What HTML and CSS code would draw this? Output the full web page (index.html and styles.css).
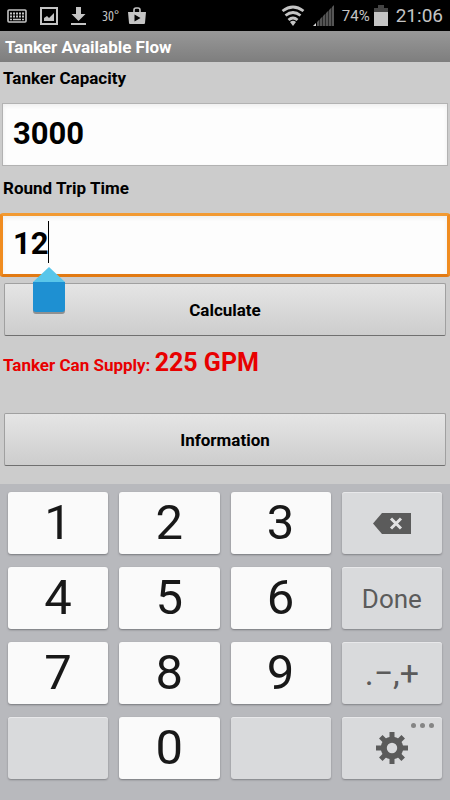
FILE: index.html
```html
<!DOCTYPE html>
<html lang="en">
<head>
<meta charset="utf-8">
<meta name="viewport" content="width=device-width, initial-scale=1">
<title>Tanker Available Flow</title>
<link rel="stylesheet" href="styles.css">
</head>
<body>
<header class="status">
  <div class="status-left">
    <svg width="20" height="14" viewBox="0 0 20 14" aria-hidden="true"><rect x="1" y="1" width="18" height="12" rx="1" fill="none" stroke="currentColor" stroke-width="1.6"/><path d="M3 4.500h14M3 7.500h14" stroke="currentColor" stroke-width="2" stroke-dasharray="2 1"/><path d="M3 10.500h2M6 10.500h8M15 10.500h2" stroke="currentColor" stroke-width="1.6"/></svg>
    <svg width="18" height="18" viewBox="0 0 18 18" aria-hidden="true"><rect x="1" y="1" width="16" height="16" fill="none" stroke="currentColor" stroke-width="2"/><path d="M4 14V11l3-2 2 2 5-5v8z" fill="currentColor"/></svg>
    <svg width="16" height="18" viewBox="0 0 16 18" aria-hidden="true"><path d="M5 0h5v7h4.500L7.500 14 .5 7H5zM0 16h15v2H0z" fill="currentColor"/></svg>
    <span class="temp">30°</span>
    <svg width="18" height="18" viewBox="0 0 18 18" aria-hidden="true"><path d="M6 5V3q0-2 2-2h2q2 0 2 2v2" fill="none" stroke="currentColor" stroke-width="1.6"/><path fill-rule="evenodd" d="M0 5h18l-1 11q0 1-1 1H2q-1 0-1-1zM6.500 7.500v7l6-3.500z" fill="currentColor"/></svg>
  </div>
  <div class="status-right">
    <svg width="24" height="21" viewBox="0 0 24 21" aria-hidden="true"><g fill="none" stroke="currentColor" stroke-width="2.800"><path d="M1.500 6q10.500-8 21 0"/><path d="M4.500 10.500q7.500-6 15 0"/><path d="M7.500 15q4.500-4 9 0"/></g><path d="M9 17q3-2.500 6 0l-3 4z" fill="currentColor"/></svg>
    <svg class="signal" width="21" height="21" viewBox="0 0 21 21" aria-hidden="true"><path d="M4 21v-4l2.500-2.500V21zM7 21v-7l2.500-2.500V21zM10 21V11l2.500-2.500V21zM13 21V8l2.500-2.500V21zM16 21V5l2.500-2.500V21zM19 21V2l2-2v21z" fill="#555"/><path d="M0 21l3-3v3z" fill="#ddd"/></svg>
    <span class="percent">74%</span>
    <svg class="battery" width="14" height="21" viewBox="0 0 14 21" aria-hidden="true"><path d="M4 0h6v3h4v5H0V3h4z" fill="#444"/><path d="M0 7h14v14H0z" fill="currentColor"/></svg>
    <time class="clock">21:06</time>
  </div>
</header>
<h1 class="title">Tanker Available Flow</h1>
<main class="form">
  <label class="label" for="capacity">Tanker Capacity</label>
  <div class="field"><input class="input" id="capacity" type="text" inputmode="numeric" value="3000"></div>
  <label class="label" for="trip">Round Trip Time</label>
  <div class="field field-focus">
    <input class="input" id="trip" type="text" inputmode="numeric" value="12">
    <span class="caret"></span>
    <svg class="handle" width="40" height="54" viewBox="0 0 40 54" aria-hidden="true"><path d="M4 18h32v27q0 3-3 3H7q-3 0-3-3z" fill="#555" opacity=".55"/><path d="M4 16L20 1l16 15z" fill="#58c6ea"/><path d="M4 16h32v27q0 3-3 3H7q-3 0-3-3z" fill="#1e90d2"/></svg>
  </div>
  <button class="action" type="button">Calculate</button>
  <p class="result">Tanker Can Supply: <strong class="amount">225 GPM</strong></p>
  <button class="action" type="button">Information</button>
</main>
<section class="keyboard" aria-label="Number keypad">
  <button class="key" type="button">1</button>
  <button class="key" type="button">2</button>
  <button class="key" type="button">3</button>
  <button class="key key-gray" type="button" aria-label="Delete"><svg width="38" height="21" viewBox="0 0 38 21"><path d="M9 0h29v21H9L0 10.500z" fill="#5b5b5b"/><path d="M18 5.500l10 10M28 5.500l-10 10" stroke="#e1e1e2" stroke-width="3"/></svg></button>
  <button class="key" type="button">4</button>
  <button class="key" type="button">5</button>
  <button class="key" type="button">6</button>
  <button class="key key-gray key-done" type="button">Done</button>
  <button class="key" type="button">7</button>
  <button class="key" type="button">8</button>
  <button class="key" type="button">9</button>
  <button class="key key-gray key-symbols" type="button">.−,+</button>
  <button class="key key-gray" type="button" aria-label="Blank"></button>
  <button class="key" type="button">0</button>
  <button class="key key-gray" type="button" aria-label="Blank"></button>
  <button class="key key-gray" type="button" aria-label="Settings">
    <svg width="32" height="32" viewBox="-16 -16 32 32"><g stroke="#5b5b5b" stroke-width="5"><path d="M0-16V-9M0 9V16M-16 0H-9M9 0H16"/><path d="M-11.200-11.200L-7-7M7 7L11.200 11.200M-11.200 11.200L-7 7M7-7L11.200-11.200"/></g><circle r="8.200" fill="none" stroke="#5b5b5b" stroke-width="6"/></svg>
    <svg class="more" width="23" height="5" viewBox="0 0 23 5"><g fill="#858585"><circle cx="2.500" cy="2.500" r="2.500"/><circle cx="11.500" cy="2.500" r="2.500"/><circle cx="20.500" cy="2.500" r="2.500"/></g></svg>
  </button>
</section>
</body>
</html>
```
FILE: styles.css
```css
* {
  box-sizing: border-box;
}

body {
  margin: 0;
  min-height: 100vh;
  display: flex;
  flex-direction: column;
  background: #ccc;
  color: #000;
  font-family: Roboto, "Liberation Sans", sans-serif;
}

button,
input {
  font-family: inherit;
  color: inherit;
}

.status {
  display: flex;
  justify-content: space-between;
  align-items: center;
  height: 31px;
  padding: 0 7px;
  background: #000;
  color: #c4c4c4;
}

.status-left,
.status-right {
  display: flex;
  align-items: center;
}

.status-left {
  gap: 13px;
}

.status-right {
  gap: 8px;
}

.temp {
  margin: 0 -4px 0 2px;
  font-family: "Open Sans", sans-serif;
  font-size: 14px;
  font-stretch: condensed;
}

.percent {
  font-size: 15px;
  font-weight: 400;
}

.battery {
  margin-left: -4px;
}

.clock {
  font-size: 19px;
  line-height: 24px;
}

.title {
  margin: 0;
  padding: 0 5px;
  height: 31px;
  background: linear-gradient(#989898, #7e7e7e);
  color: #fff;
  font-size: 17px;
  line-height: 33px;
  font-weight: 700;
}

.form {
  flex: 1;
  display: flex;
  flex-direction: column;
}

.label {
  padding: 0 3px;
  height: 32px;
  font-size: 17px;
  line-height: 32px;
  font-weight: 700;
}

.field {
  position: relative;
  display: flex;
  margin: 9px 2px 6px;
  height: 63px;
  border: 1px solid #b2b2b2;
}

.input {
  flex: 1;
  min-width: 0;
  padding: 0 10px 3px;
  border: 0;
  outline: 0;
  background: #fdfdfd;
  box-shadow: inset 0 2px 4px #eee;
  font-size: 31px;
  font-weight: 700;
}

.field-focus {
  margin: 9px 0 6px;
  height: 64px;
  border: 3px solid #f08c20;
  border-top-color: #f29a32;
  border-bottom-color: #e27a13;
  border-radius: 3px;
}

.caret {
  position: absolute;
  left: 45px;
  top: 5px;
  width: 1px;
  height: 42px;
  background: #000;
}

.handle {
  position: absolute;
  left: 26px;
  top: 50px;
  z-index: 1;
}

.action {
  margin: 0 4px;
  height: 53px;
  padding: 0;
  border: 1px solid #a0a0a0;
  border-bottom-color: #707070;
  border-radius: 2px;
  background: linear-gradient(#e5e5e5, #cdcdcd);
  font-size: 17px;
  font-weight: 700;
}

.result {
  margin: 0;
  padding: 9px 3px 0;
  height: 77px;
  color: #e80000;
  font-size: 17px;
  line-height: 36px;
  font-weight: 700;
}

.amount {
  font-size: 25px;
  font-weight: 700;
}

.keyboard {
  display: grid;
  grid-template-columns: repeat(4, 1fr);
  grid-auto-rows: 62px;
  gap: 13px 11px;
  padding: 8px 8px 21px;
  background: #b8b9bd;
}

.key {
  position: relative;
  display: flex;
  align-items: center;
  justify-content: center;
  padding: 0;
  border: 0;
  border-radius: 3px;
  background: #fafafa;
  box-shadow: 0 1px 2px #77787c;
  color: #181818;
  font-size: 49px;
  line-height: 60px;
  font-weight: 400;
}

.key-gray {
  background: #d9dadc;
  box-shadow: inset 0 1px #e8e8ea, 0 1px 2px #808185;
  color: #5b5b5b;
}

.key-done {
  padding-top: 2px;
  font-size: 26px;
}

.key-symbols {
  font-size: 34px;
}

.more {
  position: absolute;
  top: 6px;
  right: 8px;
}
```
